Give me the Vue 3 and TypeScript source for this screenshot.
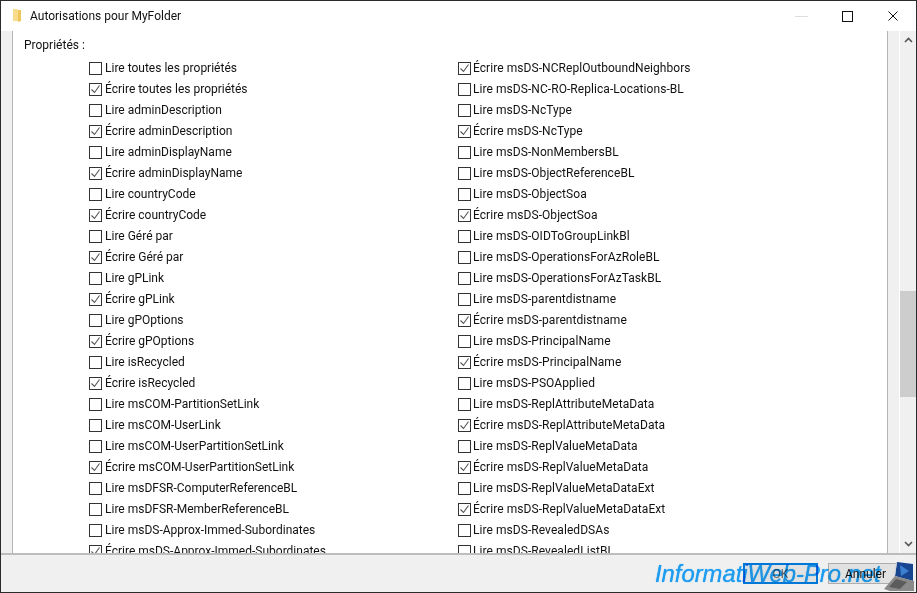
<script setup lang="ts">
const left: [string, boolean][] = [
  ['Lire toutes les propriétés', false],
  ['Écrire toutes les propriétés', true],
  ['Lire adminDescription', false],
  ['Écrire adminDescription', true],
  ['Lire adminDisplayName', false],
  ['Écrire adminDisplayName', true],
  ['Lire countryCode', false],
  ['Écrire countryCode', true],
  ['Lire Géré par', false],
  ['Écrire Géré par', true],
  ['Lire gPLink', false],
  ['Écrire gPLink', true],
  ['Lire gPOptions', false],
  ['Écrire gPOptions', true],
  ['Lire isRecycled', false],
  ['Écrire isRecycled', true],
  ['Lire msCOM-PartitionSetLink', false],
  ['Lire msCOM-UserLink', false],
  ['Lire msCOM-UserPartitionSetLink', false],
  ['Écrire msCOM-UserPartitionSetLink', true],
  ['Lire msDFSR-ComputerReferenceBL', false],
  ['Lire msDFSR-MemberReferenceBL', false],
  ['Lire msDS-Approx-Immed-Subordinates', false],
  ['Écrire msDS-Approx-Immed-Subordinates', true],
]
const right: [string, boolean][] = [
  ['Écrire msDS-NCReplOutboundNeighbors', true],
  ['Lire msDS-NC-RO-Replica-Locations-BL', false],
  ['Lire msDS-NcType', false],
  ['Écrire msDS-NcType', true],
  ['Lire msDS-NonMembersBL', false],
  ['Lire msDS-ObjectReferenceBL', false],
  ['Lire msDS-ObjectSoa', false],
  ['Écrire msDS-ObjectSoa', true],
  ['Lire msDS-OIDToGroupLinkBl', false],
  ['Lire msDS-OperationsForAzRoleBL', false],
  ['Lire msDS-OperationsForAzTaskBL', false],
  ['Lire msDS-parentdistname', false],
  ['Écrire msDS-parentdistname', true],
  ['Lire msDS-PrincipalName', false],
  ['Écrire msDS-PrincipalName', true],
  ['Lire msDS-PSOApplied', false],
  ['Lire msDS-ReplAttributeMetaData', false],
  ['Écrire msDS-ReplAttributeMetaData', true],
  ['Lire msDS-ReplValueMetaData', false],
  ['Écrire msDS-ReplValueMetaData', true],
  ['Lire msDS-ReplValueMetaDataExt', false],
  ['Écrire msDS-ReplValueMetaDataExt', true],
  ['Lire msDS-RevealedDSAs', false],
  ['Lire msDS-RevealedListBL', false],
]
const columns = [left, right]
</script>

<template>
  <div class="window">
    <header class="titlebar">
      <svg class="folder" width="10" height="14" viewBox="0 0 10 14">
        <path d="M1 0h4l1 1v11H1z" fill="#f8dc8c" />
        <path d="M6 1h3v11l-3 1z" fill="#efc65c" />
      </svg>
      <span class="title">Autorisations pour MyFolder</span>
      <div class="controls">
        <span class="ctl"><i class="min"></i></span>
        <span class="ctl"><i class="max"></i></span>
        <span class="ctl">
          <svg width="10" height="10" viewBox="0 0 10 10"><path d="M0.5 0.5l9 9M9.5 0.5l-9 9" stroke="#111" fill="none" /></svg>
        </span>
      </div>
    </header>
    <main class="body">
      <div class="gutter"></div>
      <section class="content">
        <div class="heading">Propriétés :</div>
        <div class="cols">
          <ul v-for="(col, c) in columns" :key="c" class="col">
            <li v-for="[label, checked] in col" :key="label" class="row">
              <span class="box">
                <svg v-if="checked" width="11" height="11" viewBox="0 0 11 11"><path d="M1.5 5.5l3 3 5-7" stroke="#555" stroke-width="1.1" fill="none" /></svg>
              </span>
              <span class="label">{{ label }}</span>
            </li>
          </ul>
        </div>
      </section>
      <div class="gutter-right"></div>
      <div class="scrollbar">
        <svg width="9" height="6" viewBox="0 0 9 6"><path d="M1 5l3.5-3.5L8 5" stroke="#555" stroke-width="1.6" fill="none" /></svg>
        <div class="track"><div class="thumb"></div></div>
        <svg width="9" height="6" viewBox="0 0 9 6"><path d="M1 1l3.5 3.5L8 1" stroke="#555" stroke-width="1.6" fill="none" /></svg>
      </div>
    </main>
    <footer class="footer">
      <button class="btn primary">OK</button>
      <button class="btn">Annuler</button>
    </footer>
    <div class="watermark">InformatiWeb-Pro.net</div>
    <svg class="laptop" width="34" height="33" viewBox="0 0 34 33">
      <path d="M15 3l16 2v17l-18-5z" fill="#17458f" />
      <path d="M18 6l9 6-8 5z" fill="#3d7fd0" />
      <path d="M15 3l-2 14-1 1 2-15z" fill="#cfd6e0" />
      <path d="M2 30l11-13 19 5v10H8z" fill="#8a8a8a" />
      <path d="M7 28l7-8 11 3-7 7z" fill="#5c5c5c" />
    </svg>
  </div>
</template>

<style>
html, body { margin: 0; padding: 0; background: #fff; }
</style>

<style scoped>
.window {
  position: relative;
  box-sizing: border-box;
  width: 917px;
  height: 593px;
  border: 1px solid #2b2b2b;
  display: flex;
  flex-direction: column;
  overflow: hidden;
  background: #fff;
  font-family: Roboto, "Open Sans", sans-serif;
  font-size: 12px;
  color: #111;
}
.titlebar {
  height: 30px;
  flex: none;
  display: flex;
  align-items: center;
  padding-left: 11px;
}
.folder { margin-right: 8px; margin-top: -1px; }
.title { margin-top: -1px; }
.controls { margin-left: auto; display: flex; }
.ctl {
  width: 46px;
  height: 30px;
  display: flex;
  align-items: center;
  justify-content: center;
}
.min { width: 13px; height: 1px; background: #ddd; }
.max { width: 9px; height: 9px; border: 1px solid #111; box-sizing: content-box; }
.body { flex: 1; min-height: 0; display: flex; }
.gutter {
  width: 11px;
  flex: none;
  background: #f0f0f0;
  border-right: 1px solid #b5b5b5;
  box-sizing: content-box;
}
.content { flex: 1; min-width: 0; overflow: hidden; padding-left: 11px; }
.heading { height: 22px; padding-top: 5px; line-height: 18px; box-sizing: content-box; }
.cols { display: flex; padding-left: 65px; }
.col { list-style: none; margin: 0; padding: 0; width: 369px; flex: none; }
.col:last-child { letter-spacing: 0.06px; }
.col:last-child .box { margin-right: 2px; }
.row { height: 21px; display: flex; align-items: center; white-space: nowrap; }
.label { margin-top: -2px; }
.box {
  box-sizing: border-box;
  width: 13px;
  height: 13px;
  border: 1px solid #333;
  background: #fff;
  margin-right: 3px;
  display: flex;
  align-items: center;
  justify-content: center;
  flex: none;
}
.gutter-right {
  width: 11px;
  flex: none;
  background: #f0f0f0;
  border-left: 1px solid #b5b5b5;
  box-sizing: content-box;
}
.scrollbar {
  width: 17px;
  flex: none;
  background: #f0f0f0;
  border-left: 1px solid #fff;
  display: flex;
  flex-direction: column;
  align-items: center;
  padding: 6px 0;
  box-sizing: border-box;
}
.track { flex: 1; width: 100%; padding-top: 248px; }
.thumb { height: 106px; background: #cdcdcd; }
.footer {
  height: 39px;
  flex: none;
  box-sizing: border-box;
  background: #f0f0f0;
  border-top: 2px solid #bdbdbd;
  display: flex;
  justify-content: flex-end;
  gap: 10px;
  padding: 8px 13px 0 0;
}
.btn {
  width: 75px;
  height: 21px;
  box-sizing: border-box;
  border: 1px solid #adadad;
  background: #e1e1e1;
  font: inherit;
  color: #111;
  padding: 0;
}
.primary { border: 2px solid #0078d7; color: #666; }
.watermark {
  position: absolute;
  left: 654px;
  top: 559px;
  font-family: "Liberation Sans", sans-serif;
  font-style: italic;
  font-size: 23.8px;
  line-height: 28px;
  color: #1fa6ff;
  white-space: nowrap;
  text-shadow: 0 0 1px #1fa6ff;
  mix-blend-mode: multiply;
}
.laptop { position: absolute; right: 0; bottom: 0; }
</style>
